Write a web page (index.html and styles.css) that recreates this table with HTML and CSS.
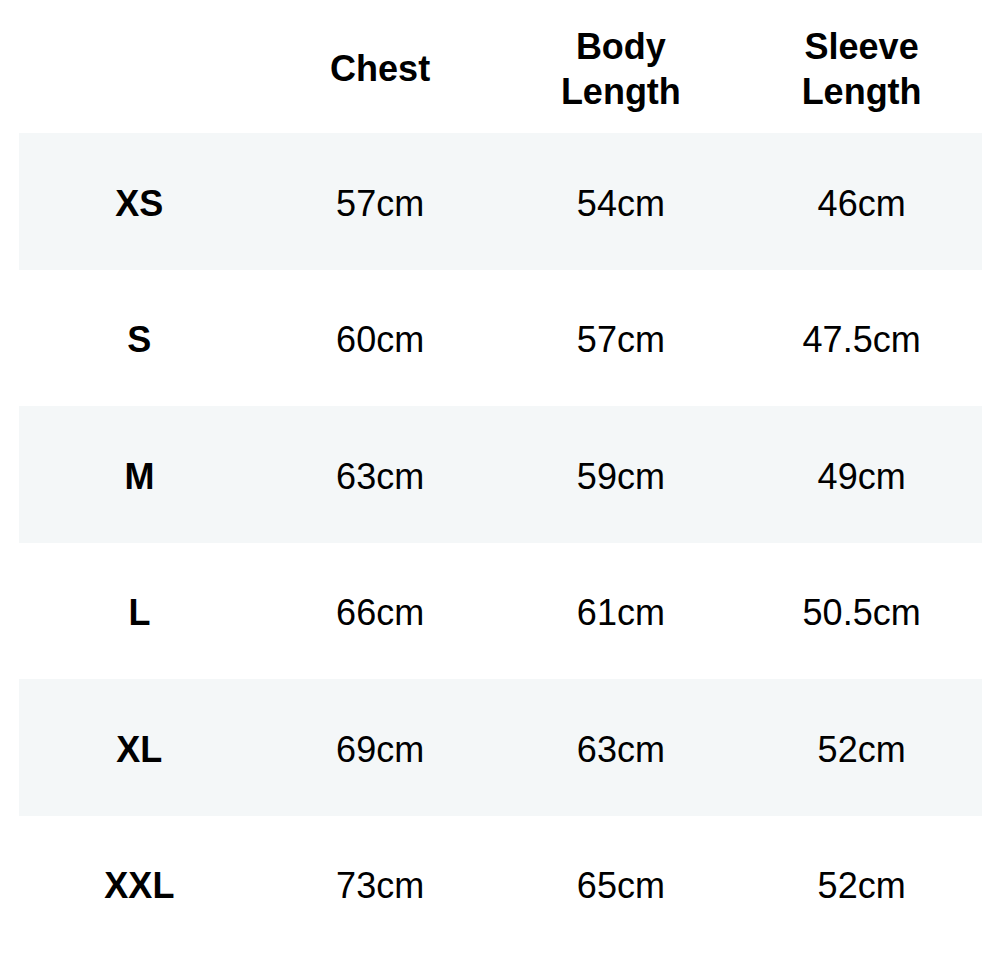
FILE: index.html
```html
<!DOCTYPE html>
<html lang="en">
<head>
<meta charset="utf-8">
<title>Size Chart</title>
<link rel="stylesheet" href="styles.css">
</head>
<body>
<div class="wrap">
<table class="size-table">
  <thead>
    <tr class="head-row">
      <th></th>
      <th>Chest</th>
      <th>Body<br>Length</th>
      <th>Sleeve<br>Length</th>
    </tr>
  </thead>
  <tbody>
    <tr class="row stripe"><th>XS</th><td>57cm</td><td>54cm</td><td>46cm</td></tr>
    <tr class="row"><th>S</th><td>60cm</td><td>57cm</td><td>47.5cm</td></tr>
    <tr class="row stripe"><th>M</th><td>63cm</td><td>59cm</td><td>49cm</td></tr>
    <tr class="row"><th>L</th><td>66cm</td><td>61cm</td><td>50.5cm</td></tr>
    <tr class="row stripe"><th>XL</th><td>69cm</td><td>63cm</td><td>52cm</td></tr>
    <tr class="row"><th>XXL</th><td>73cm</td><td>65cm</td><td>52cm</td></tr>
  </tbody>
</table>
</div>
</body>
</html>
```

FILE: styles.css
```css
html, body {
  margin: 0;
  padding: 0;
  background: #ffffff;
}

body {
  font-family: "Liberation Sans", Arial, Helvetica, sans-serif;
  color: #000000;
}

.wrap {
  padding: 0 22px 0 19px;
}

.size-table {
  width: 963px;
  border-collapse: collapse;
  table-layout: fixed;
  font-size: 36px;
  line-height: 45px;
}

.size-table th,
.size-table td {
  padding: 4px 0 0 0;
  text-align: center;
  vertical-align: middle;
}

.size-table th {
  font-weight: 700;
}

.size-table td {
  font-weight: 400;
}

.head-row {
  height: 133px;
}

.row {
  height: 136.5px;
}

.stripe {
  background: #f4f7f8;
}
```
